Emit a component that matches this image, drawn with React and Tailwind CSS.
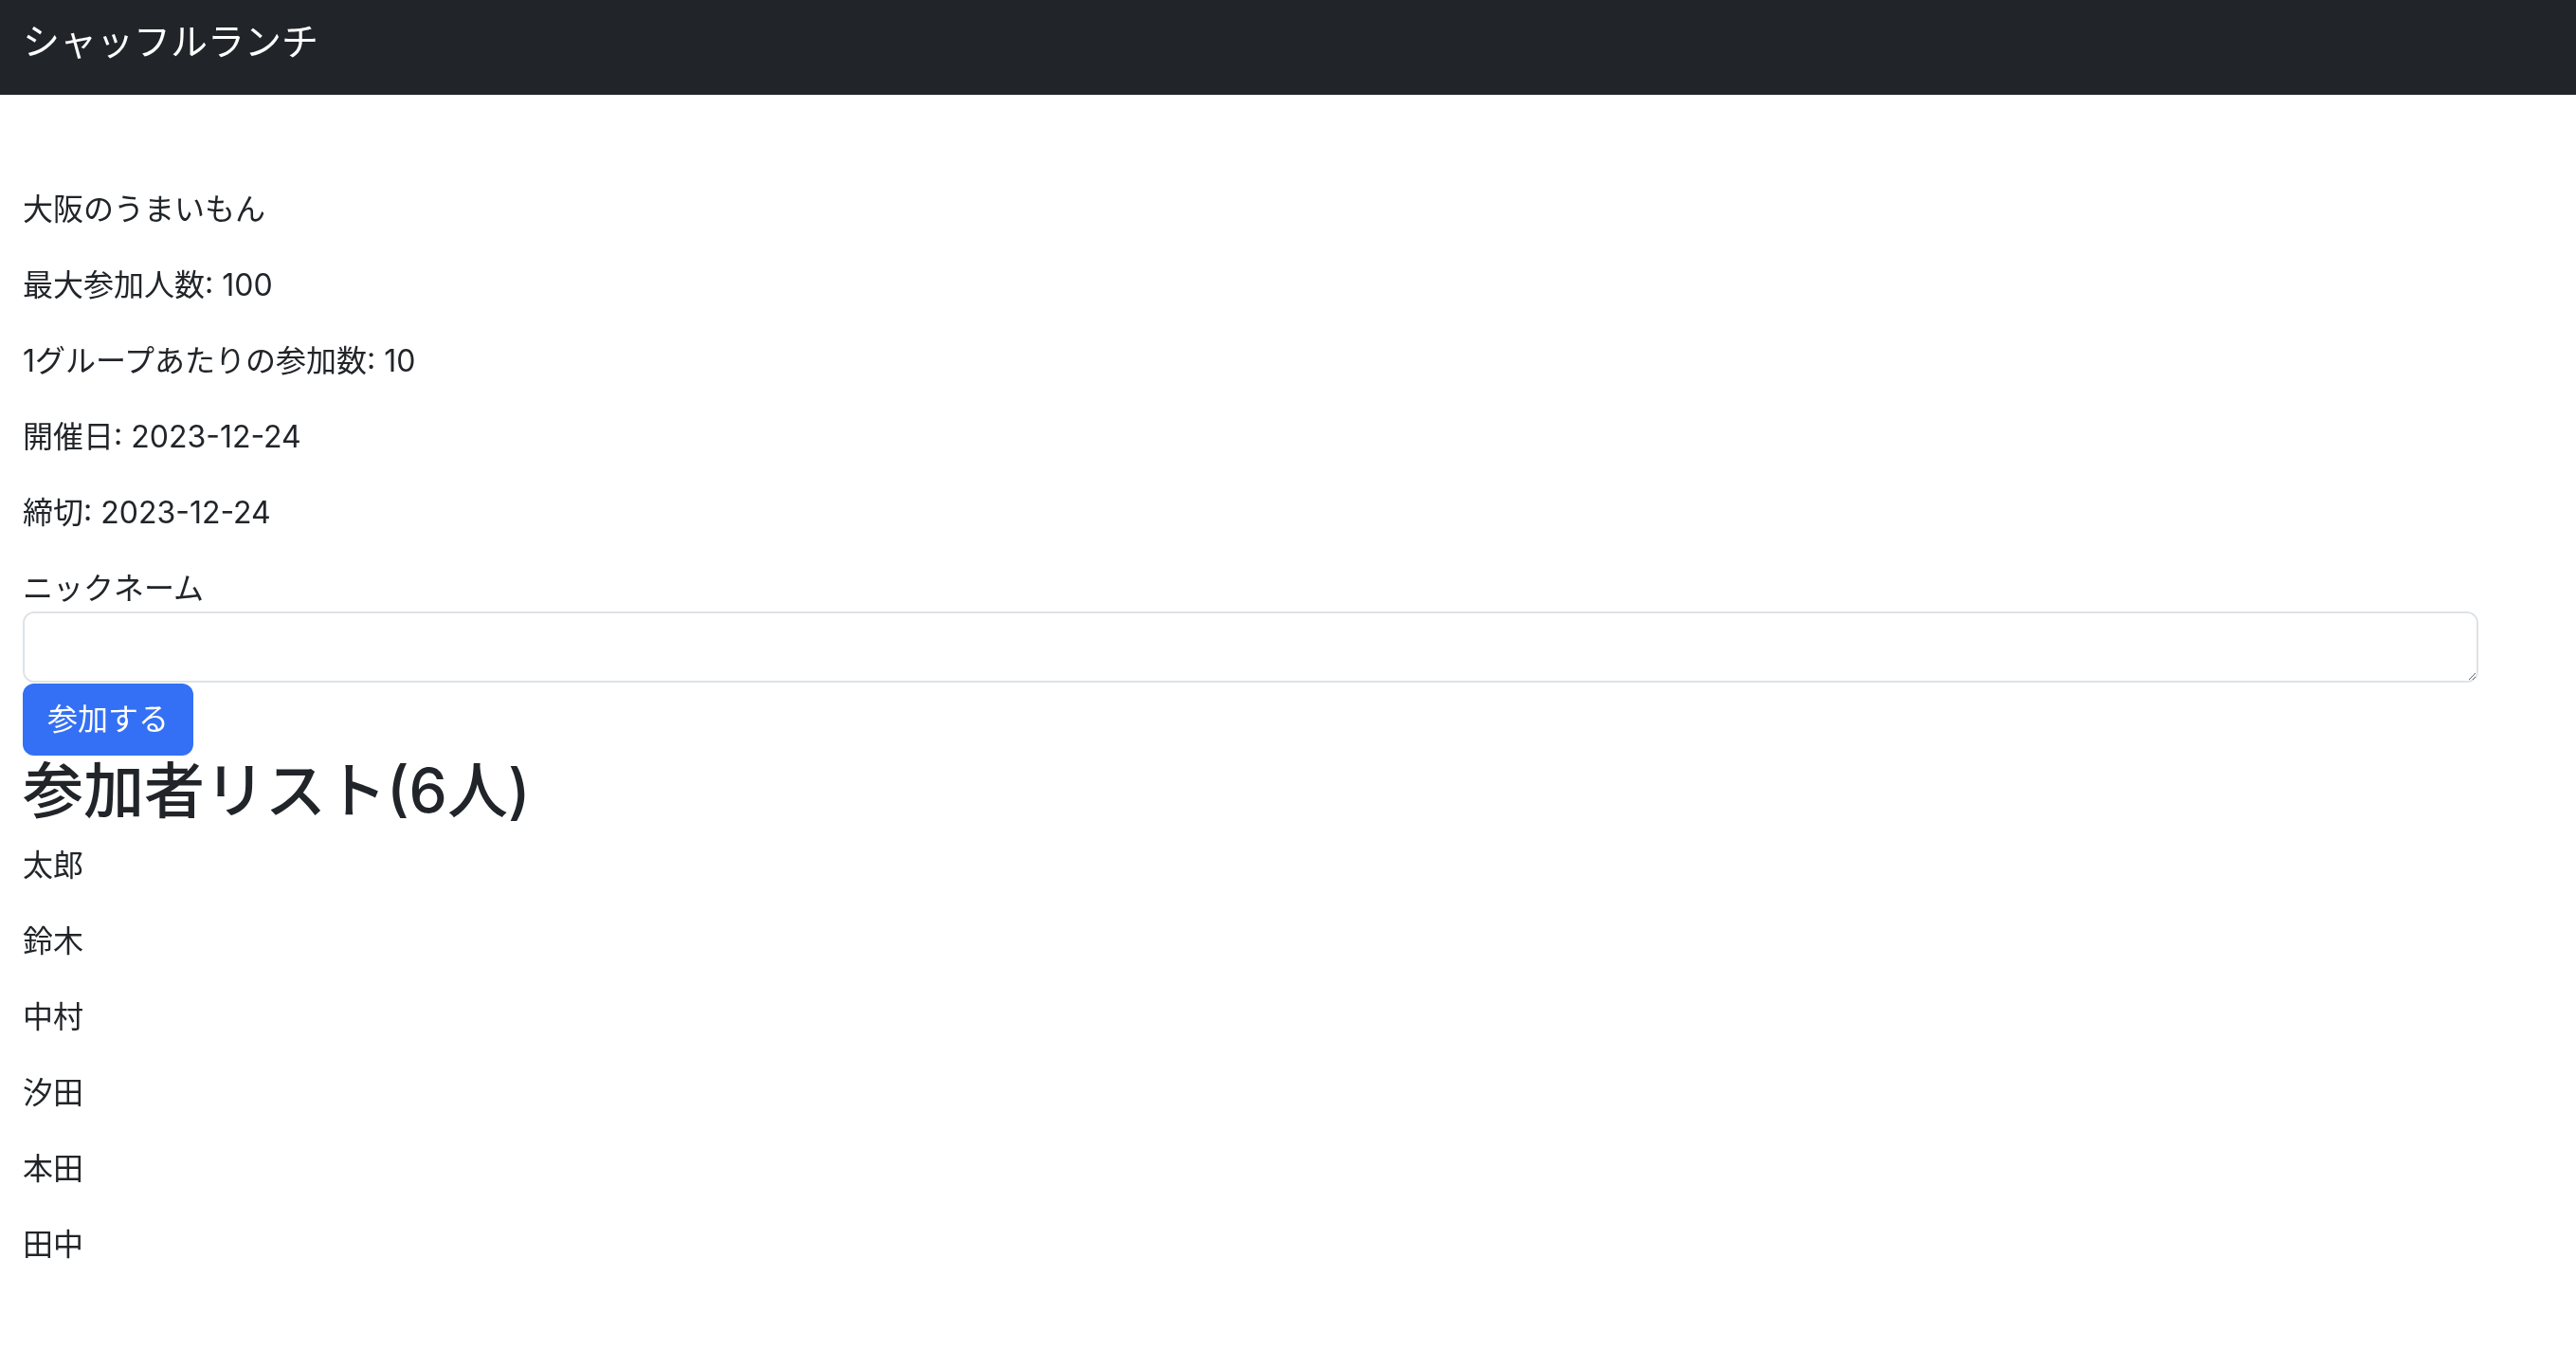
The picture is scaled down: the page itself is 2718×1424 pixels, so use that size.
import React from "react";

const infos = [
  "大阪のうまいもん",
  "最大参加人数: 100",
  "1グループあたりの参加数: 10",
  "開催日: 2023-12-24",
  "締切: 2023-12-24",
];

const names = ["太郎", "鈴木", "中村", "汐田", "本田", "田中"];

export default function App() {
  return (
    <div
      className="min-h-screen bg-white text-[#212529]"
      style={{ fontFamily: 'Inter, "Noto Sans CJK JP", sans-serif' }}
    >
      <nav className="h-[100px] bg-[#212529] px-[24px]">
        <span className="block pt-[14px] text-[39px] leading-[60px] text-white">
          シャッフルランチ
        </span>
      </nav>
      <div className="px-[24px] pt-[97px] text-[32px] leading-[48px]">
        {infos.map((t) => (
          <p key={t} className="mb-[32px]">
            {t}
          </p>
        ))}
        <label className="block">ニックネーム</label>
        <textarea className="block h-[75px] w-[2591px] rounded-[12px] border-2 border-[#dee2e6] bg-white px-[24px] py-[12px] text-[32px] outline-none" />
        <button className="mt-[1px] block h-[76px] w-[180px] rounded-[12px] bg-[#3470f5] text-[32px] leading-[48px] text-white">
          参加する
        </button>
        <h2 className="mt-0 mb-[18px] text-[64px] leading-[74px] font-medium">
          参加者リスト(6人)
        </h2>
        {names.map((n) => (
          <p key={n} className="mb-[32px]">
            {n}
          </p>
        ))}
      </div>
    </div>
  );
}
